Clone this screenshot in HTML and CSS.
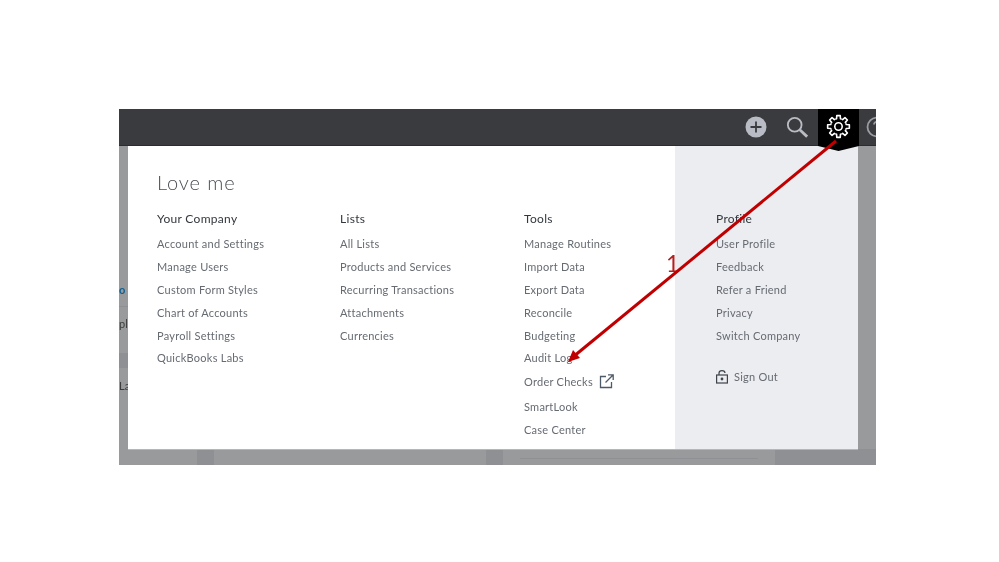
FILE: index.html
```html
<!DOCTYPE html>
<html lang="en">
<head>
    <meta charset="UTF-8">
    <title>Settings menu</title>
    <link rel="stylesheet" href="styles.css">
</head>
<body>
    <div class="shot">
        <div class="topbar">
            <svg class="icon-plus" width="22" height="22" viewBox="0 0 22 22">
                <circle cx="11" cy="11" r="10.500" fill="#b9bcc4"/>
                <path d="M11 5.500v11M5.500 11h11" stroke="#3a3b3f" stroke-width="1.800"/>
            </svg>
            <svg class="icon-search" width="22" height="22" viewBox="0 0 24 24" fill="none" stroke="#b9bcc4">
                <circle cx="9.500" cy="9.500" r="7.500" stroke-width="2"/>
                <path d="M15 15l8 7.500" stroke-width="3"/>
            </svg>
            <div class="gear-tab">
                <svg width="25" height="25" viewBox="-12.500 -12.500 25 25" fill="none" stroke="#fff" stroke-width="1.600" stroke-linejoin="round">
                    <circle r="3.700"/>
                    <path id="tooth" d="M-3.060-7.390L-1.940-7.760L-1.720-10.860H1.720L1.940-7.760L3.060-7.390"/>
                    <use href="#tooth" transform="rotate(45)"/>
                    <use href="#tooth" transform="rotate(90)"/>
                    <use href="#tooth" transform="rotate(135)"/>
                    <use href="#tooth" transform="rotate(180)"/>
                    <use href="#tooth" transform="rotate(225)"/>
                    <use href="#tooth" transform="rotate(270)"/>
                    <use href="#tooth" transform="rotate(315)"/>
                </svg>
            </div>
            <svg class="icon-help" width="22" height="22" viewBox="0 0 22 22" fill="none" stroke="#9a9da4" stroke-width="1.800">
                <circle cx="11" cy="11" r="9.500"/>
                <path d="M8 8.500a3 3 0 1 1 4 3c-.7.4-1 .8-1 1.800M11 15v1.500"/>
            </svg>
        </div>
        <div class="backdrop">
            <span class="behind behind-o">o</span>
            <span class="behind behind-p">pl</span>
            <span class="behind behind-la">La</span>
            <i class="mark mark-line1"></i>
            <i class="mark mark-line2"></i>
            <i class="mark mark-block1"></i>
            <i class="mark mark-block2"></i>
            <i class="mark mark-block3"></i>
            <i class="mark mark-line3"></i>
            <div class="panel">
                <div class="main">
                    <h1>Love me</h1>
                    <div class="cols">
                        <div class="col col-company">
                            <h2>Your Company</h2>
                            <a>Account and Settings</a>
                            <a>Manage Users</a>
                            <a>Custom Form Styles</a>
                            <a>Chart of Accounts</a>
                            <a>Payroll Settings</a>
                            <a class="tight">QuickBooks Labs</a>
                        </div>
                        <div class="col col-lists">
                            <h2>Lists</h2>
                            <a>All Lists</a>
                            <a>Products and Services</a>
                            <a>Recurring Transactions</a>
                            <a>Attachments</a>
                            <a>Currencies</a>
                        </div>
                        <div class="col col-tools">
                            <h2>Tools</h2>
                            <a>Manage Routines</a>
                            <a>Import Data</a>
                            <a>Export Data</a>
                            <a>Reconcile</a>
                            <a>Budgeting</a>
                            <a class="tight">Audit Log</a>
                            <a class="with-icon">Order Checks
                                <svg width="15" height="15" viewBox="0 0 15 15" fill="none" stroke="#4d5a68" stroke-width="1.300">
                                    <path d="M7 2.500H1.500v11h11V8M6.500 8.500L14 1M9 .8h5.200V6"/>
                                </svg>
                            </a>
                            <a class="gap-small">SmartLook</a>
                            <a>Case Center</a>
                        </div>
                    </div>
                </div>
                <div class="side">
                    <h2>Profile</h2>
                    <a>User Profile</a>
                    <a>Feedback</a>
                    <a>Refer a Friend</a>
                    <a>Privacy</a>
                    <a>Switch Company</a>
                    <a class="signout">
                        <svg width="12" height="14" viewBox="0 0 12 14" fill="none" stroke="#3f444b" stroke-width="1.200">
                            <rect x=".6" y="5" width="10.800" height="8"/>
                            <path d="M3 5V3a3 2.400 0 0 1 6 0"/>
                            <circle cx="6" cy="9" r=".8" fill="#3f444b"/>
                        </svg>
                        Sign Out
                    </a>
                </div>
            </div>
        </div>
        <svg class="arrow" width="300" height="260" viewBox="0 0 300 260">
            <path d="M272 32L12 245.500" stroke="#c00000" stroke-width="3"/>
            <path d="M4 253L9 241L16 249Z" fill="#c00000"/>
        </svg>
        <span class="step">1</span>
    </div>
</body>
</html>
```

FILE: styles.css
```css
body {
    margin: 0;
    background-color: #ffffff;
    font-family: 'Lato', 'Open Sans', sans-serif;
    overflow: hidden;
}

.shot {
    position: relative;
    width: 757px;
    height: 356px;
    margin: 109px 0 0 119px;
    overflow: hidden;
    filter: blur(0.4px);
}

.topbar {
    height: 37px;
    background-color: #3a3b3f;
    box-sizing: border-box;
    border-bottom: 1px solid #2b2c2f;
    display: flex;
    align-items: center;
    justify-content: flex-end;
}

.icon-plus {
    margin-right: 19px;
}

.icon-search {
    margin-right: 10px;
}

.gear-tab {
    position: relative;
    z-index: 1;
    align-self: flex-start;
    width: 41px;
    height: 42px;
    background-color: #000000;
    clip-path: polygon(0 0, 100% 0, 100% 37px, 50% 100%, 0 37px);
    display: flex;
    justify-content: center;
    padding-top: 5px;
    box-sizing: border-box;
}

.icon-help {
    flex-shrink: 0;
    margin-left: 7px;
    margin-right: -12px;
}

.backdrop {
    position: relative;
    height: 319px;
    background-color: #999a9c;
}

.behind {
    position: absolute;
    left: 0;
    font-size: 11px;
    color: #3c3c3c;
}

.behind-o {
    top: 137px;
    color: #0d5f94;
    font-weight: bold;
}

.behind-p {
    top: 171px;
}

.behind-la {
    top: 233px;
}

.mark {
    position: absolute;
    background-color: #8f9093;
}

.mark-line1 {
    left: 0;
    top: 160px;
    width: 9px;
    height: 1px;
}

.mark-line2 {
    left: 0;
    top: 207px;
    width: 9px;
    height: 15px;
}

.mark-block1 {
    left: 78px;
    bottom: 0;
    width: 17px;
    height: 16px;
}

.mark-block2 {
    left: 367px;
    bottom: 0;
    width: 17px;
    height: 16px;
}

.mark-block3 {
    right: 0;
    bottom: 0;
    width: 101px;
    height: 16px;
}

.mark-line3 {
    left: 401px;
    bottom: 6px;
    width: 238px;
    height: 1px;
}

.panel {
    position: relative;
    margin-left: 9px;
    width: 730px;
    height: 304px;
    display: flex;
    background-color: #ffffff;
    border-bottom: 1px solid #b5b6b8;
    box-sizing: border-box;
}

.main {
    width: 547px;
    padding: 24px 0 0 29px;
    box-sizing: border-box;
}

h1 {
    margin: 0 0 16px;
    font-size: 20px;
    line-height: 24px;
    font-weight: 300;
    letter-spacing: 0.9px;
    color: #4a4f55;
}

h2 {
    margin: 0 0 4px;
    font-size: 12px;
    line-height: 18px;
    font-weight: 400;
    letter-spacing: 0.3px;
    color: #33383e;
}

.cols {
    display: flex;
}

.col-company {
    width: 183px;
}

.col-lists {
    width: 184px;
}

.col a,
.side a {
    display: block;
    height: 23px;
    line-height: 23px;
    font-size: 11px;
    letter-spacing: 0.25px;
    color: #666b72;
    white-space: nowrap;
}

.col a.tight {
    margin-top: -1px;
}

.col a.with-icon {
    display: flex;
    align-items: center;
    gap: 6px;
    margin-top: 1px;
}

.col a.gap-small {
    margin-top: 2px;
}

.side {
    flex: 1;
    background-color: #ecedf1;
    padding: 64px 0 0 41px;
}

.side a.signout {
    margin-top: 18px;
    display: flex;
    align-items: center;
    gap: 6px;
}

.arrow {
    position: absolute;
    z-index: 2;
    left: 445px;
    top: 0;
}

.step {
    position: absolute;
    left: 547px;
    top: 142px;
    font-size: 23px;
    line-height: 24px;
    color: #b41f1f;
}
```
